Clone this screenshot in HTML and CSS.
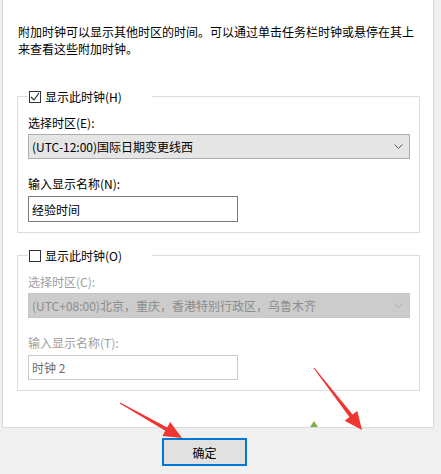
FILE: index.html
```html
<!DOCTYPE html>
<html lang="zh-CN">
<head>
    <meta charset="UTF-8">
    <title>附加时钟</title>
    <link rel="stylesheet" href="styles.css">
</head>
<body>
    <div class="panel">
        <p class="intro">附加时钟可以显示其他时区的时间。可以通过单击任务栏时钟或悬停在其上来查看这些附加时钟。</p>

        <fieldset class="group">
            <legend><span class="box"><svg width="10" height="10" viewBox="0 0 10 10"><polyline points="1,5 4,8 9,1" fill="none" stroke="#222" stroke-width="1.1"/></svg></span>显示此时钟(H)</legend>
            <label class="field-label">选择时区(E):</label>
            <div class="select">
                <span>(UTC-12:00)国际日期变更线西</span>
                <svg class="chev" width="9" height="5" viewBox="0 0 9 5"><polyline points="0.5,0.5 4.5,4.5 8.5,0.5" fill="none" stroke="#555" stroke-width="1"/></svg>
            </div>
            <label class="field-label gap">输入显示名称(N):</label>
            <div class="textbox">经验时间</div>
        </fieldset>

        <fieldset class="group second">
            <legend><span class="box"></span>显示此时钟(O)</legend>
            <label class="field-label off">选择时区(C):</label>
            <div class="select off">
                <span>(UTC+08:00)北京，重庆，香港特别行政区，乌鲁木齐</span>
                <svg class="chev" width="9" height="5" viewBox="0 0 9 5"><polyline points="0.5,0.5 4.5,4.5 8.5,0.5" fill="none" stroke="#b0b0b0" stroke-width="1"/></svg>
            </div>
            <label class="field-label gap off">输入显示名称(T):</label>
            <div class="textbox off">时钟 2</div>
        </fieldset>
    </div>

    <div class="footer">
        <button class="ok">确定</button>
    </div>

    <!-- red annotation arrows drawn over the dialog -->
    <svg class="marks" width="441" height="474" viewBox="0 0 441 474">
        <polygon points="310,427 314,421 318,427" fill="#7cb342"/>
        <polygon points="120.2,402.6 167.3,427.4 170.2,422.1 182,438 162.4,436.1 165.3,430.8 119.8,403.4" fill="#ef3530"/>
        <polygon points="314.4,367.7 352.6,414.6 357.3,410.9 362,430 344.7,420.7 349.4,417 313.6,368.3" fill="#ef3530"/>
    </svg>
</body>
</html>
```

FILE: styles.css
```css
* {
    box-sizing: border-box;
}

body {
    margin: 0;
    width: 441px;
    height: 474px;
    position: relative;
    background-color: #f0f0f0;
    font-family: "Noto Sans CJK SC", sans-serif;
    font-size: 12px;
    line-height: 17px;
    color: #000;
    overflow: hidden;
}

.panel {
    margin-left: 2px;
    width: 432px;
    height: 428px;
    background-color: #fff;
    border: 1px solid #d9d9d9;
    border-top: none;
    padding-top: 23px;
}

.intro {
    margin: 0 0 31px 15px;
    width: 405px;
}

.group {
    margin: 0 0 0 14px;
    width: 403px;
    border: 1px solid #dcdcdc;
    padding: 9px 9px 10px 10px;
}

.group.second {
    margin-top: 14px;
}

legend {
    display: flex;
    align-items: center;
    width: 124px;
    padding: 0 0 0 1px;
    background-color: #fff;
}

.box {
    width: 12px;
    height: 12px;
    border: 1px solid #333;
    margin-right: 4px;
    display: flex;
    align-items: center;
    justify-content: center;
}

.field-label {
    display: block;
    margin-bottom: 3px;
}

.field-label.gap {
    margin-top: 16px;
    margin-bottom: 4px;
}

.select {
    height: 25px;
    display: flex;
    align-items: center;
    justify-content: space-between;
    padding: 0 6px 0 3px;
    background-color: #e5e5e5;
    border: 1px solid #adadad;
}

.select.off {
    background-color: #cccccc;
    border-color: #c6c6c6;
    color: #8c8c8c;
}

.textbox {
    width: 210px;
    height: 26px;
    padding: 0 3px;
    display: flex;
    align-items: center;
    border: 1px solid #7a7a7a;
}

.textbox.off {
    height: 25px;
    border-color: #cccccc;
    color: #6d6d6d;
}

.field-label.off {
    color: #a0a0a0;
}

.footer {
    padding: 10px 0 0 162px;
}

.ok {
    width: 85px;
    height: 28px;
    margin: 0;
    padding: 0;
    font: inherit;
    color: #000;
    background-color: #e1e1e1;
    border: 2px solid #0078d7;
}

.marks {
    position: absolute;
    left: 0;
    top: 0;
    pointer-events: none;
}
```
